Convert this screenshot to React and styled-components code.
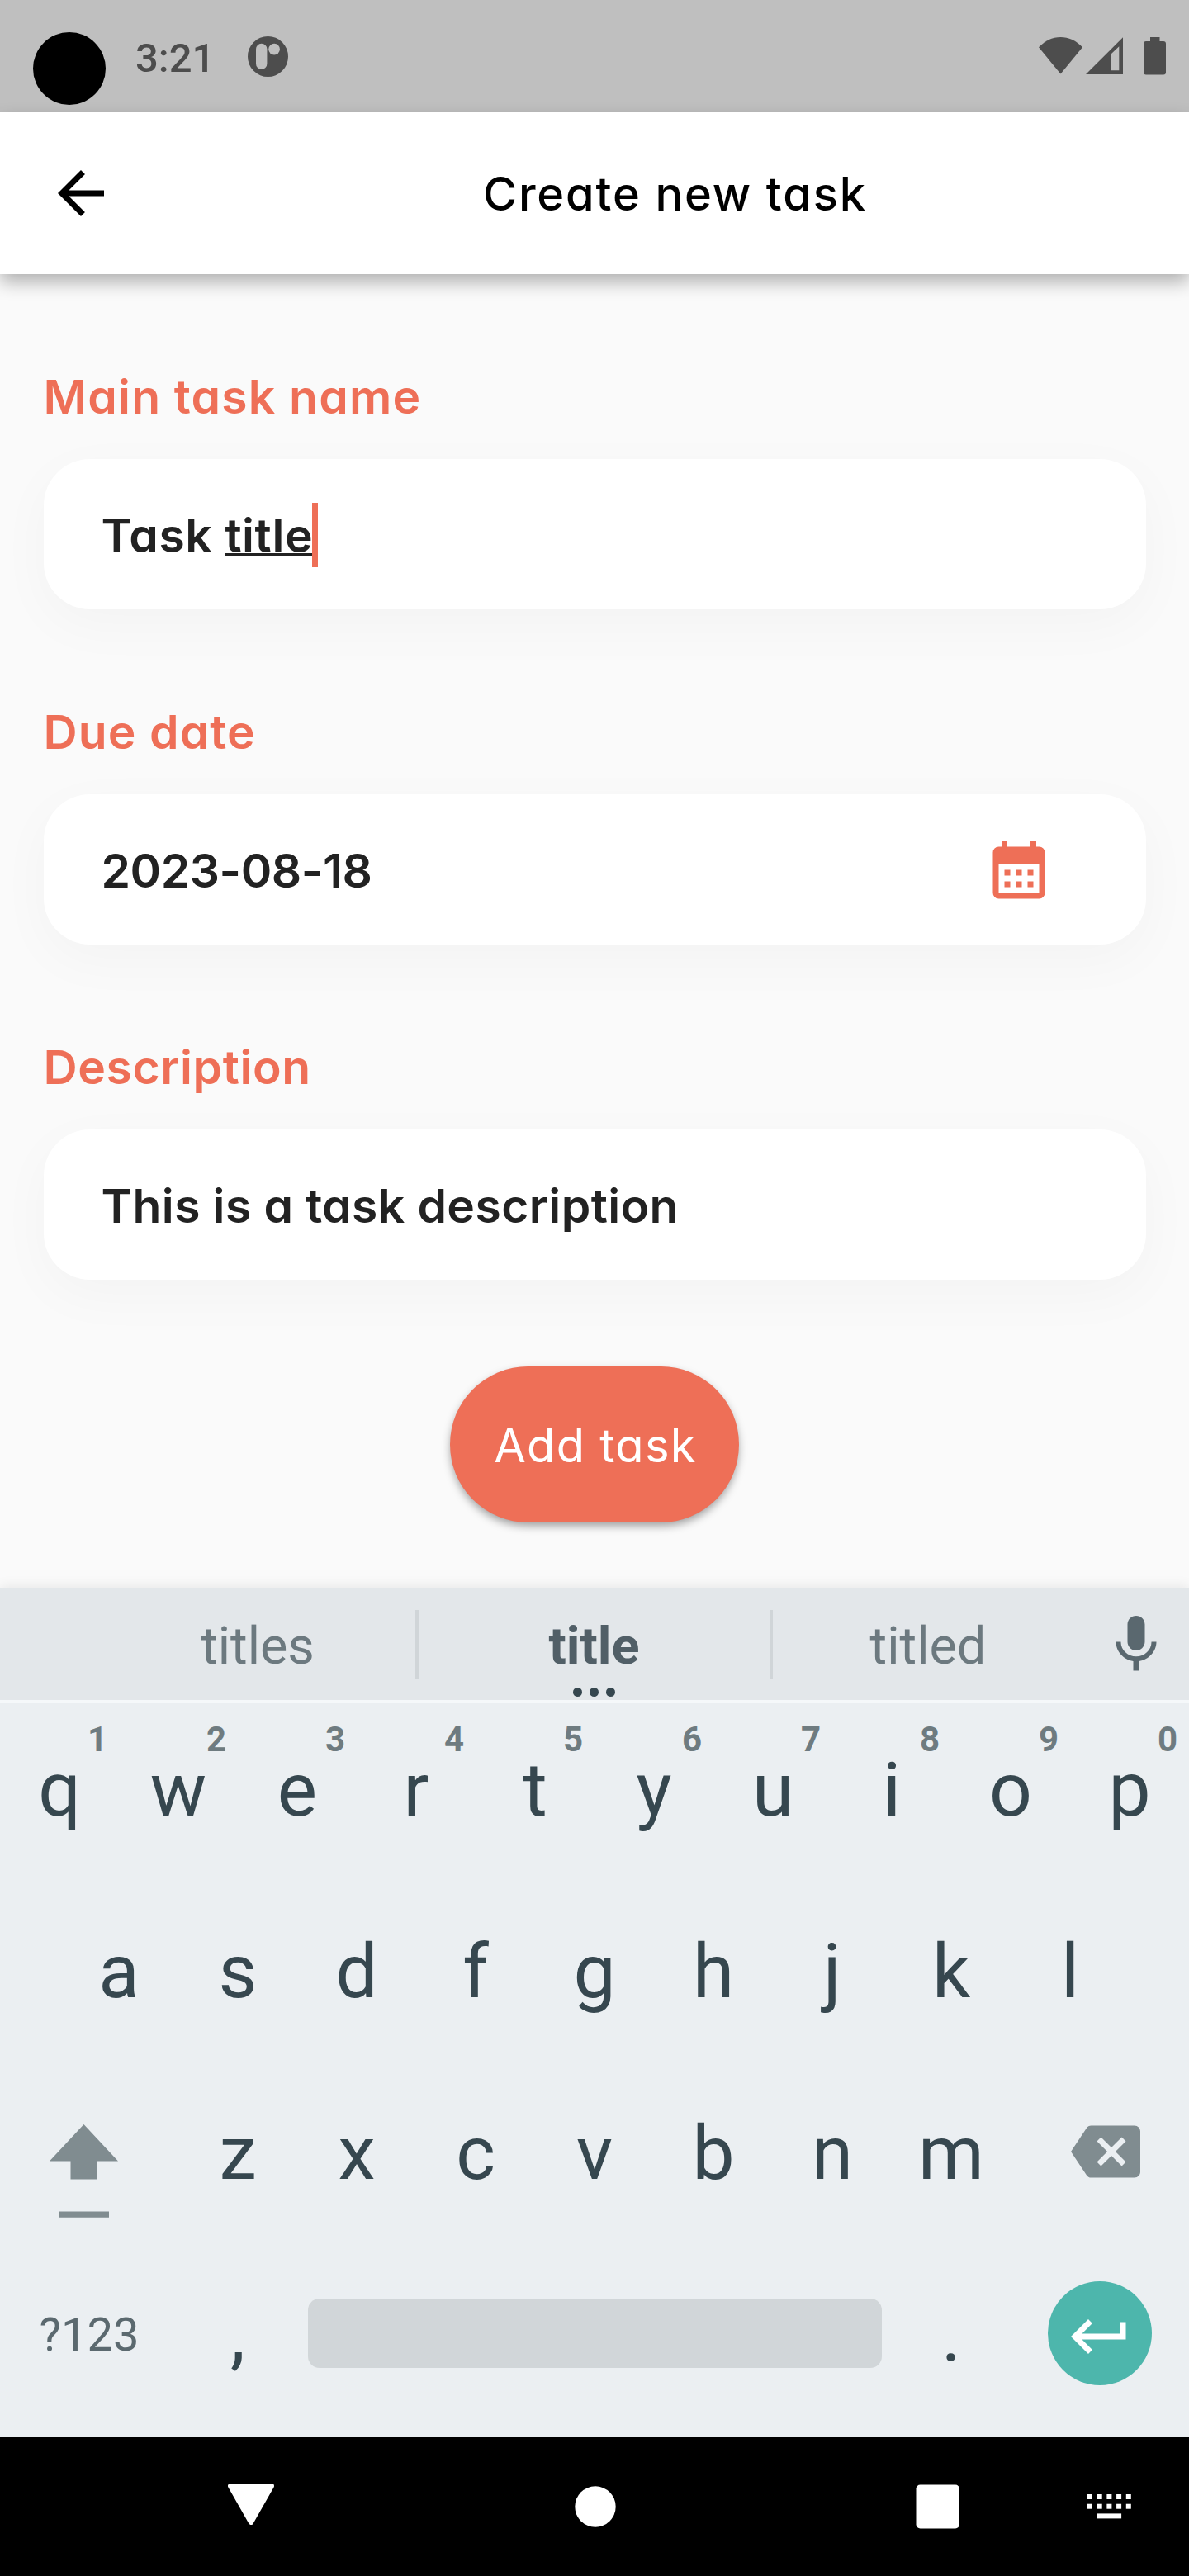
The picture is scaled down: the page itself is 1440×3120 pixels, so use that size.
import React from 'react';
import styled, { createGlobalStyle } from 'styled-components';

const coral = '#ee6f57';
const ink = '#36474f';

const GlobalStyle = createGlobalStyle`
  *, *::before, *::after { box-sizing: border-box; }
  body { margin: 0; background: #fafafa; }
  svg { display: block; flex: none; }
`;

const Screen = styled.div`
  width: 1440px;
  height: 3120px;
  display: flex;
  flex-direction: column;
  overflow: hidden;
  background: #fafafa;
  font-family: Inter, 'Liberation Sans', sans-serif;
  font-feature-settings: 'cv11' 1;
`;

/* Status bar */
const StatusBar = styled.div`
  flex: none;
  height: 136px;
  display: flex;
  align-items: flex-start;
  padding: 39px 28px 0 40px;
  background: #bfbfbf;
`;

const Camera = styled.div`
  width: 88px;
  height: 88px;
  border-radius: 50%;
  background: #000;
`;

const Clock = styled.div`
  width: 136px;
  margin: 3px 0 0 36px;
  font: 500 49px/58px Roboto, sans-serif;
  color: #4d4d4d;
`;

const StatusIcons = styled.div`
  display: flex;
  margin: 6px 0 0 auto;
`;

const IconBox = styled.div`
  margin: ${(p) => p.$margin || '0'};
`;

/* App bar */
const AppBar = styled.header`
  position: relative;
  flex: none;
  height: 196px;
  display: flex;
  align-items: center;
  padding: 0 56px;
  background: #fff;
  box-shadow: 0 9.5px 21px rgba(0, 0, 0, 0.3);
`;

const Title = styled.h1`
  margin: 2px 0 0 445px;
  font-size: 56px;
  font-weight: 500;
  line-height: 84px;
  letter-spacing: ${(p) => p.$track}px;
  white-space: nowrap;
  color: #000;
`;

/* Form */
const Form = styled.main`
  flex: none;
  height: 1591px;
  display: flex;
  flex-direction: column;
  padding: 106px 52.5px 0;
`;

const Field = styled.section`
  display: flex;
  flex-direction: column;
  gap: 34px;
  margin-bottom: 106px;

  &:last-of-type { margin-bottom: 105px; }
`;

const Label = styled.label`
  height: 84px;
  font-size: 57px;
  font-weight: 600;
  line-height: 85px;
  letter-spacing: ${(p) => p.$track}px;
  white-space: nowrap;
  color: ${coral};
`;

const Card = styled.div`
  height: 182px;
  display: flex;
  align-items: center;
  justify-content: space-between;
  padding: 0 112px 0 70px;
  border-radius: 56px;
  background: #fff;
  box-shadow: 0 18px 66px rgba(0, 0, 0, 0.03);
`;

const Value = styled.div`
  display: flex;
  align-items: center;
  padding-top: 3px;
  font-size: 57px;
  font-weight: 600;
  line-height: 84px;
  letter-spacing: ${(p) => p.$track}px;
  white-space: pre;
  color: #222;
`;

const Composing = styled.span`
  text-decoration: underline 3px #222;
  text-underline-offset: 1px;
  text-decoration-skip-ink: none;
`;

const Caret = styled.span`
  width: 7px;
  height: 78px;
  margin: -2px 0 0 -1px;
  background: ${coral};
`;

const AddButton = styled.button`
  align-self: center;
  width: 350px;
  height: 189px;
  padding: 3px 0 0 2px;
  border: 0;
  border-radius: 95px;
  background: ${coral};
  box-shadow: 0 5px 11px -1px rgba(0, 0, 0, 0.38);
  color: #fff;
  font-family: inherit;
  font-feature-settings: inherit;
  font-size: 56px;
  font-weight: 400;
  letter-spacing: ${(p) => p.$track}px;
`;

/* Keyboard */
const Keyboard = styled.div`
  flex: none;
  height: 1029px;
  background: #ebeff2;
  box-shadow: 0 -2px 14px rgba(0, 0, 0, 0.08);
  font-family: Roboto, sans-serif;
  font-feature-settings: normal;
`;

const Suggestions = styled.div`
  height: 140px;
  display: flex;
  align-items: stretch;
  padding-left: 121px;
  border-bottom: 4px solid #f5f8fa;
  background: #e3e7ea;
`;

const Suggestion = styled.div`
  position: relative;
  width: ${(p) => p.$width}px;
  padding-top: 3px;
  text-align: center;
  font-size: 63px;
  font-weight: ${(p) => (p.$strong ? 700 : 400)};
  line-height: 136px;
  color: ${(p) => (p.$strong ? '#515f67' : '#6c797f')};
`;

const Separator = styled.div`
  width: 4px;
  height: 84px;
  margin-top: 27px;
  background: #d0d5d8;
`;

const MoreDots = styled.div`
  position: absolute;
  left: 0;
  right: 0;
  top: 121px;
  display: flex;
  justify-content: center;
  gap: 9px;
`;

const Dot = styled.i`
  width: 11px;
  height: 11px;
  border-radius: 50%;
  background: ${ink};
`;

const Rows = styled.div`
  display: flex;
  flex-direction: column;
  gap: 10px;
`;

const Row = styled.div`
  height: 210px;
  display: flex;
  justify-content: center;
`;

const Key = styled.div`
  position: relative;
  width: 144px;
  height: 210px;
  text-align: center;
  font-size: 91px;
  line-height: 210px;
  color: ${ink};
`;

const Hint = styled.span`
  position: absolute;
  left: 98px;
  top: 20px;
  width: 40px;
  text-align: center;
  font-size: 42px;
  font-weight: 700;
  line-height: 48px;
  color: #6e7b80;
`;

const WideKey = styled.div`
  width: 216px;
  height: 210px;
  display: flex;
  justify-content: center;
  align-items: ${(p) => p.$align || 'center'};
  padding: ${(p) => p.$pad || '0'};
  font-size: 56px;
  color: #5b696f;
`;

const SpaceKey = styled.div`
  width: 695px;
  height: 84px;
  margin: 61px 12px 0 13px;
  border-radius: 14px;
  background: #d1d6d9;
`;

const EnterKey = styled.div`
  width: 126px;
  height: 126px;
  display: flex;
  align-items: center;
  justify-content: center;
  padding-top: 7px;
  border-radius: 50%;
  background: #4db6ac;
`;

/* System navigation */
const NavBar = styled.nav`
  position: relative;
  flex: none;
  height: 168px;
  display: flex;
  align-items: flex-start;
  padding: 56px 70px 0 276px;
  background: #000;
`;

const Filled = ({ size = 84, d, color, w, h, box }) => (
  <svg width={w || size} height={h || size} viewBox={box || '0 0 24 24'} fill={color}>
    <path d={d} />
  </svg>
);

const topRow = [...'qwertyuiop'].map((c, i) => [c, (i + 1) % 10]);

export default function App() {
  return (
    <>
      <GlobalStyle />
      <Screen>
        <StatusBar>
          <Camera />
          <Clock>3:21</Clock>
          <IconBox $margin="5px 0 0">
            <svg width="49" height="49" viewBox="0 0 49 49">
              <circle cx="24.5" cy="24.5" r="24.5" fill="#4d4d4d" />
              <rect x="10" y="8.7" width="13.4" height="31.3" rx="6.7" fill="#bfbfbf" />
              <circle cx="32.1" cy="15.6" r="6.8" fill="#bfbfbf" />
            </svg>
          </IconBox>
          <StatusIcons>
            <Filled w={53} h={46} box="0 0 53 46" color="#4d4d4d" d="M0 12.3C15-4.1 38-4.1 53 12.3L26.5 44.6z" />
            <IconBox $margin="0 25px 0 4px">
              <svg width="45" height="46" viewBox="0 0 45 46" fill="#4d4d4d" fillRule="evenodd">
                <path d="M45 .3V45H0zM31 20v20.3h9.3V11.2z" />
              </svg>
            </IconBox>
            <Filled w={27} h={46} box="0 0 27 46" color="#4d4d4d" d="M8 0h11.500v5H24a3 3 0 0 1 3 3v34.500a3 3 0 0 1-3 3H3a3 3 0 0 1-3-3V8a3 3 0 0 1 3-3h5z" />
          </StatusIcons>
        </StatusBar>

        <AppBar>
          <Filled color="#000" d="M20 11H7.83l5.59-5.59L12 4l-8 8 8 8 1.410-1.410L7.830 13H20v-2z" />
          <Title $track={1.85}>Create new task</Title>
        </AppBar>

        <Form>
          <Field>
            <Label $track={1.2}>Main task name</Label>
            <Card>
              <Value $track={0.6}>
                <span>Task <Composing>title</Composing></span>
                <Caret />
              </Value>
            </Card>
          </Field>
          <Field>
            <Label $track={1.1}>Due date</Label>
            <Card>
              <Value $track={-0.45}>2023-08-18</Value>
              <IconBox $margin="7px 0 0">
                <Filled
                  color={coral}
                  d="M9 11v2H7v-2h2m4 0v2h-2v-2h2m4 0v2h-2v-2h2m2-8a2 2 0 0 1 2 2v14a2 2 0 0 1-2 2H5a2 2 0 0 1-2-2V5a2 2 0 0 1 2-2h1V1h2v2h8V1h2v2h1m0 16V9H5v10h14M9 15v2H7v-2h2m4 0v2h-2v-2h2m4 0v2h-2v-2h2z"
                />
              </IconBox>
            </Card>
          </Field>
          <Field>
            <Label $track={0.6}>Description</Label>
            <Card>
              <Value $track={0.4}>This is a task description</Value>
            </Card>
          </Field>
          <AddButton $track={1.3}>Add task</AddButton>
        </Form>

        <Keyboard>
          <Suggestions>
            <Suggestion $width={382}>titles</Suggestion>
            <Separator />
            <Suggestion $width={425} $strong>
              title
              <MoreDots><Dot /><Dot /><Dot /></MoreDots>
            </Suggestion>
            <Separator />
            <Suggestion $width={376}>titled</Suggestion>
            <IconBox $margin="27px 0 0 22px">
              <Filled color="#5a686f" d="M12 14c1.660 0 3-1.340 3-3V5c0-1.660-1.340-3-3-3S9 3.340 9 5v6c0 1.660 1.340 3 3 3zm5.300-3c0 3-2.540 5.100-5.300 5.100S6.700 14 6.700 11H5c0 3.410 2.720 6.230 6 6.720V21h2v-3.280c3.280-.48 6-3.300 6-6.720h-1.700z" />
            </IconBox>
          </Suggestions>
          <Rows>
            <Row>
              {topRow.map(([c, n]) => (
                <Key key={c}>{c}<Hint>{n}</Hint></Key>
              ))}
            </Row>
            <Row>{[...'asdfghjkl'].map((c) => <Key key={c}>{c}</Key>)}</Row>
            <Row>
              <WideKey $align="flex-start" $pad="70px 14px 0 0">
                <Filled w={83} h={113} box="0 0 83 113" color="#808c90" d="M41.500 0L83 44.500H57.500V66.500H25.500V44.500H0zM12 105.500h60v7.200H12z" />
              </WideKey>
              {[...'zxcvbnm'].map((c) => <Key key={c}>{c}</Key>)}
              <WideKey $pad="0 0 4px 14px">
                <Filled color="#808c90" d="M22 3H7c-.69 0-1.230.350-1.590.880L0 12l5.410 8.110c.360.530.9.890 1.590.890h15c1.100 0 2-.9 2-2V5c0-1.100-.9-2-2-2zm-3 12.590L17.590 17 14 13.410 10.410 17 9 15.590 12.590 12 9 8.410 10.410 7 14 10.590 17.590 7 19 8.410 15.410 12 19 15.590z" />
              </WideKey>
            </Row>
            <Row>
              <WideKey>?123</WideKey>
              <Key>,</Key>
              <SpaceKey />
              <Key>.</Key>
              <WideKey $pad="0 0 4px">
                <EnterKey>
                  <Filled color="#fff" d="M19 7v4H5.830l3.580-3.590L8 6l-6 6 6 6 1.410-1.410L5.830 13H21V7z" />
                </EnterKey>
              </WideKey>
            </Row>
          </Rows>
        </Keyboard>

        <NavBar>
          <svg width="56" height="50" viewBox="0 0 56 50">
            <path d="M3 3H53L28 47z" fill="#fff" stroke="#fff" strokeWidth="6" strokeLinejoin="round" />
          </svg>
          <IconBox $margin="3px 0 0 363.5px">
            <svg width="50" height="50"><circle cx="25" cy="25" r="24.700" fill="#fff" /></svg>
          </IconBox>
          <IconBox $margin="1px 0 0 363px">
            <svg width="54" height="54"><rect x=".5" y=".5" width="52.500" height="53" rx="5" fill="#fff" /></svg>
          </IconBox>
          <IconBox $margin="13px 0 0 154px">
            <svg width="54" height="30" fill="#fff">
              {[0, 1, 2, 3, 4].map((i) => (
                <React.Fragment key={i}>
                  <rect x={i * 11.7} y="0" width="6" height="6" />
                  <rect x={i * 11.7} y="11.700" width="6" height="6" />
                </React.Fragment>
              ))}
              <rect x="11.700" y="23.400" width="29.400" height="6" />
            </svg>
          </IconBox>
        </NavBar>
      </Screen>
    </>
  );
}
